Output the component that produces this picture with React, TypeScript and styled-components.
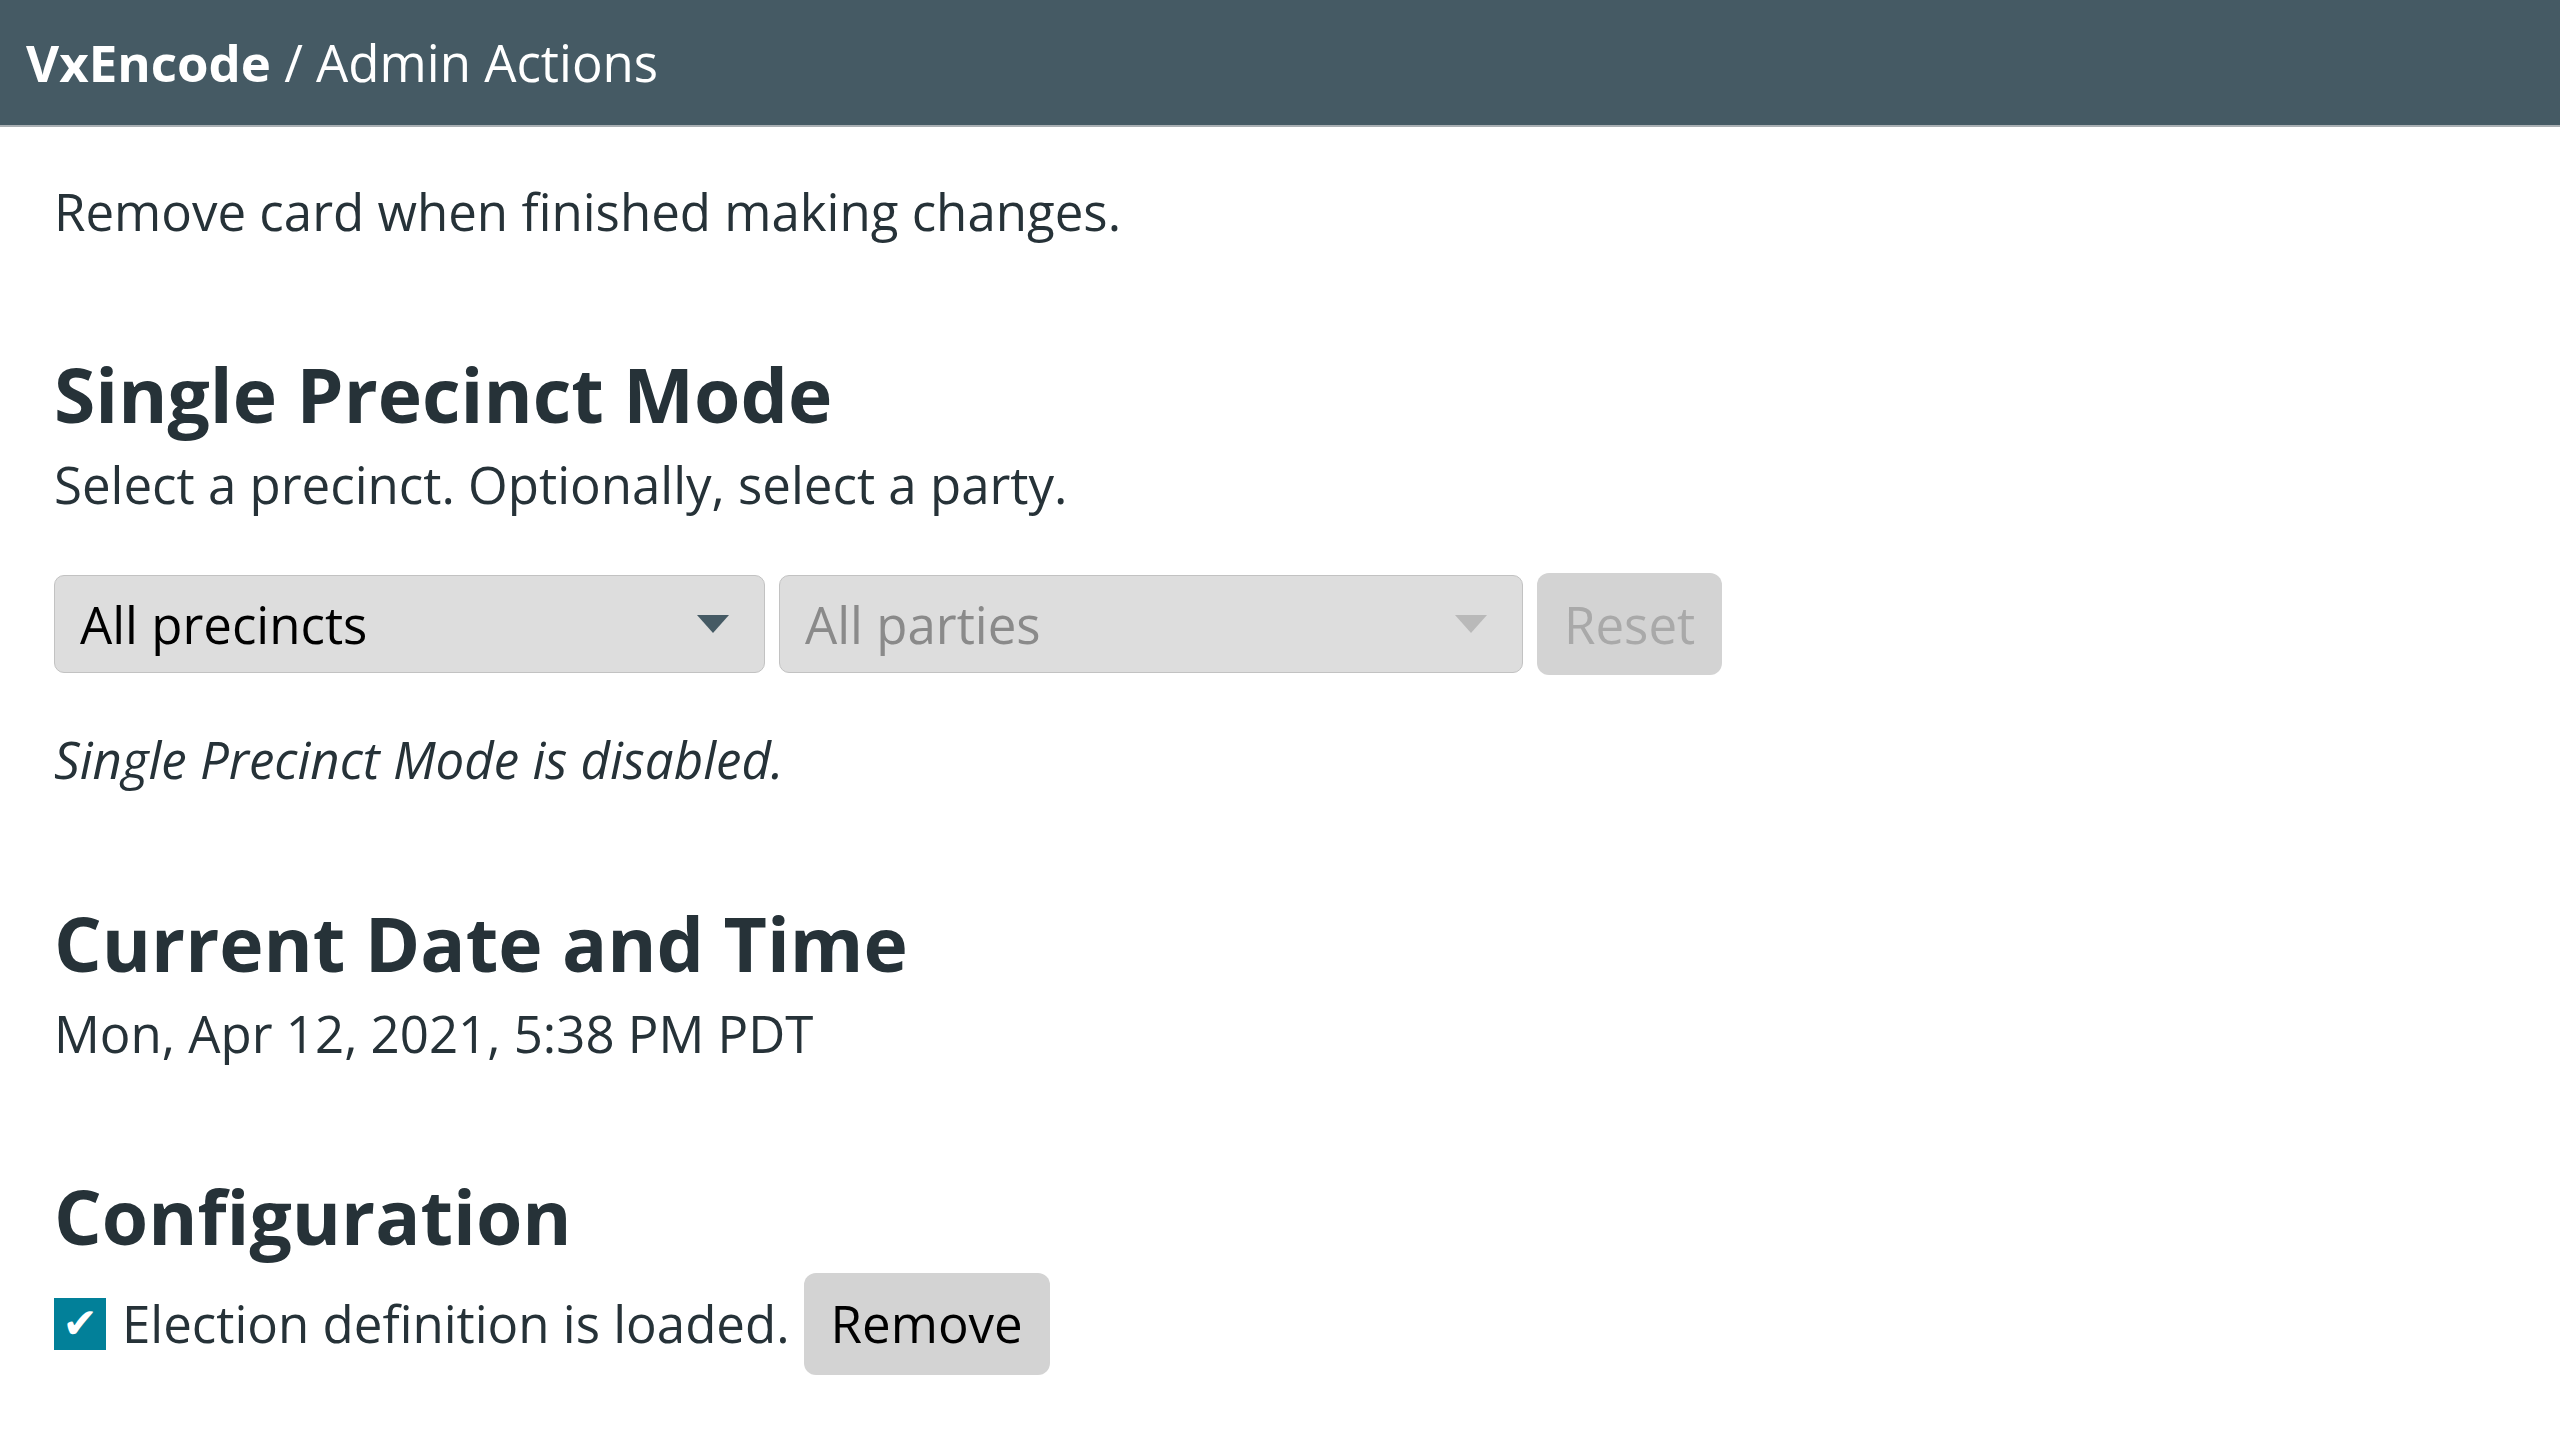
import React from "react";
import styled, { createGlobalStyle } from "styled-components";

const GlobalStyle = createGlobalStyle`
  html, body {
    margin: 0;
    padding: 0;
    height: 100%;
    overflow: hidden;
  }

  body {
    font-family: "Open Sans", "Noto Sans", sans-serif;
    color: #263238;
    background: #ffffff;
  }
`;

const Screen = styled.div`
  display: flex;
  flex-direction: column;
  height: 100vh;
`;

const TopBar = styled.header`
  flex: 0 0 auto;
  height: 125px;
  display: flex;
  align-items: center;
  padding: 0 26px;
  background: #455a64;
  border-bottom: 2px solid #a9afb3;
  color: #ffffff;
  font-size: 51px;
  line-height: 1;

  strong {
    font-weight: 700;
  }
`;

const Main = styled.main`
  flex: 1 1 auto;
  min-height: 0;
  overflow-y: scroll;
  padding: 54px 54px 110px;

  &::-webkit-scrollbar {
    width: 15px;
  }

  &::-webkit-scrollbar-track {
    background: #f1f1f1;
  }

  &::-webkit-scrollbar-thumb {
    background: #c1c1c1;
    border: 2px solid #f1f1f1;
  }

  &::-webkit-scrollbar-button:single-button {
    display: block;
    height: 15px;
    background-color: #f1f1f1;
  }

  &::-webkit-scrollbar-button:single-button:vertical:decrement {
    background-image: linear-gradient(to top left, transparent 50%, #a3a3a3 50%),
      linear-gradient(to top right, transparent 50%, #a3a3a3 50%);
    background-size: 4px 4px, 4px 4px;
    background-position: 3.5px 6px, 7.5px 6px;
    background-repeat: no-repeat;
  }

  &::-webkit-scrollbar-button:single-button:vertical:increment {
    background-image: linear-gradient(to bottom left, transparent 50%, #505050 50%),
      linear-gradient(to bottom right, transparent 50%, #505050 50%);
    background-size: 4px 4px, 4px 4px;
    background-position: 3.5px 5px, 7.5px 5px;
    background-repeat: no-repeat;
  }
`;

const Section = styled.section`
  margin-bottom: 107px;

  &:last-child {
    margin-bottom: 0;
  }
`;

const Text = styled.p<{ italic?: boolean }>`
  margin: 0;
  font-size: 51px;
  line-height: 1.2;
  font-style: ${(p) => (p.italic ? "italic" : "normal")};
`;

const Heading = styled.h1`
  margin: 0 0 15px;
  font-size: 75px;
  line-height: 1.2;
  font-weight: 700;
`;

const Controls = styled.div`
  display: flex;
  align-items: center;
  gap: 14px;
  margin: 58px 0 54px;
`;

const Select = styled.div<{ width: number; disabled?: boolean }>`
  box-sizing: border-box;
  width: ${(p) => p.width}px;
  height: 98px;
  display: flex;
  align-items: center;
  justify-content: space-between;
  padding: 0 34px 0 25px;
  background: #dddddd;
  border: 1px solid #c2c2c2;
  border-radius: 10px;
  font-size: 51px;
  line-height: 1.2;
  color: ${(p) => (p.disabled ? "#8a8a8a" : "#000000")};
`;

const Arrow = styled.svg<{ disabled?: boolean }>`
  width: 34px;
  height: 20px;
  fill: ${(p) => (p.disabled ? "#b9b9b9" : "#455a64")};
`;

const Button = styled.button<{ disabled?: boolean }>`
  box-sizing: border-box;
  height: 102px;
  padding: 0 27px;
  border: none;
  border-radius: 12px;
  background: #d3d3d3;
  font-family: inherit;
  font-size: 51px;
  line-height: 1.2;
  color: ${(p) => (p.disabled ? "#a9a9a9" : "#000000")};
`;

const StatusRow = styled.div`
  display: flex;
  align-items: center;
  gap: 14px;
  margin-top: -3px;
`;

const Check = styled.span`
  display: flex;
  align-items: center;
  justify-content: center;
  width: 52px;
  height: 52px;
  background: #028099;
  color: #ffffff;
  font-size: 42px;
  font-family: "DejaVu Sans", sans-serif;
  line-height: 1;
  margin-right: 2px;
`;

function DropdownArrow({ disabled }: { disabled?: boolean }) {
  return (
    <Arrow viewBox="0 0 34 20" disabled={disabled}>
      <path d="M1 1 H33 L17 19 Z" />
    </Arrow>
  );
}

export default function App() {
  return (
    <Screen>
      <GlobalStyle />
      <TopBar>
        <strong>VxEncode</strong>&nbsp;/ Admin Actions
      </TopBar>
      <Main>
        <Section>
          <Text>Remove card when finished making changes.</Text>
        </Section>
        <Section>
          <Heading>Single Precinct Mode</Heading>
          <Text>Select a precinct. Optionally, select a party.</Text>
          <Controls>
            <Select width={711}>
              All precincts
              <DropdownArrow />
            </Select>
            <Select width={744} disabled>
              All parties
              <DropdownArrow disabled />
            </Select>
            <Button disabled>Reset</Button>
          </Controls>
          <Text italic>Single Precinct Mode is disabled.</Text>
        </Section>
        <Section>
          <Heading>Current Date and Time</Heading>
          <Text>Mon, Apr 12, 2021, 5:38 PM PDT</Text>
        </Section>
        <Section>
          <Heading>Configuration</Heading>
          <StatusRow>
            <Check>✔</Check>
            <Text>Election definition is loaded.</Text>
            <Button>Remove</Button>
          </StatusRow>
        </Section>
      </Main>
    </Screen>
  );
}
